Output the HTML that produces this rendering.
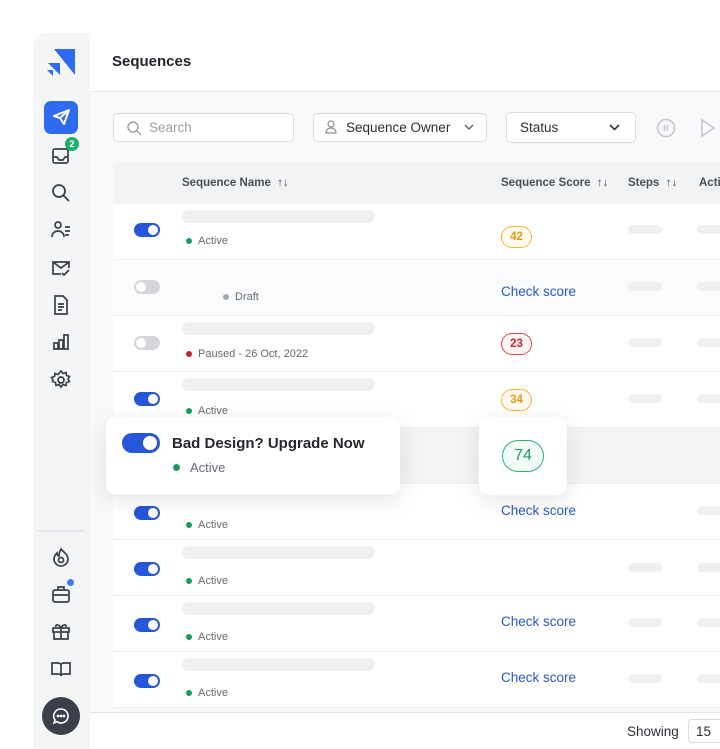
<!DOCTYPE html><html><head><style>
*{box-sizing:border-box;margin:0;padding:0}
body{width:720px;height:749px;background:#fff;font-family:"Liberation Sans",sans-serif;position:relative;overflow:hidden;color:#1f2328}
.abs{position:absolute}
.sb{left:33px;top:33px;width:57px;height:716px;background:#f4f5f7;border-radius:14px 0 0 0}
.ic{position:absolute;left:50px;width:22px;height:22px}
.main{left:90px;top:33px;width:630px;height:716px;background:#f8f9fa}
.tog{position:absolute;width:26px;height:14px;border-radius:7px;background:#2756d8}
.tog::after{content:"";position:absolute;right:2px;top:2px;width:10px;height:10px;border-radius:50%;background:#fff}
.tog.off{background:#d4d6da}.tog.off::after{left:2px;right:auto}
.row{position:absolute;left:113px;width:607px;height:56px;border-bottom:1px solid #eceef1;background:#fff}
.sk{position:absolute;height:13px;border-radius:7px;background:#eef0f2}
.st{position:absolute;font-size:11px;color:#666a70}
.st i{position:absolute;left:-12px;top:3px;width:6px;height:6px;border-radius:50%;background:#1a9a62}
.bd{position:absolute;left:388px;width:31px;height:22px;border-radius:11px;font-size:11.5px;font-weight:bold;text-align:center;line-height:20px}
.cs{position:absolute;left:388px;font-size:13.5px;color:#2a57c7}
</style></head><body>
<div class="abs sb"></div>
<svg class="abs" style="left:46px;top:49px" width="30" height="28"><polygon points="8,0 29,0 29,26" fill="#2f6bf0"/><polygon points="2,14 14,14 14,26" fill="#2f6bf0"/><polygon points="1,21 7,21 7,27" fill="#2f6bf0"/></svg>
<div class="abs" style="left:44px;top:101px;width:34px;height:33px;border-radius:7px;background:#2f6bf0"></div>
<svg class="abs" style="left:51px;top:107px" width="20" height="20" fill="none" stroke="#fff" stroke-width="2" stroke-linejoin="round"><path d="M3 9 L18 3 L13 17 L9 11 Z M9 11 L18 3"/></svg>
<svg class="ic" style="top:145px" viewBox="0 0 22 22" fill="none" stroke="#3b3f46" stroke-width="1.7"><rect x="3" y="4" width="15" height="14" rx="2"/><path d="M3 12h4l2 3h4l2-3h3"/></svg>
<div class="abs" style="left:65px;top:137px;width:14px;height:14px;border-radius:50%;background:#1eae6e;color:#fff;font-size:9px;font-weight:bold;text-align:center;line-height:14px">2</div>
<svg class="ic" style="top:182px" viewBox="0 0 22 22" fill="none" stroke="#3b3f46" stroke-width="1.8"><circle cx="9" cy="9" r="6"/><path d="M13.5 13.5 L19 19"/></svg>
<svg class="ic" style="top:219px" viewBox="0 0 22 22" fill="none" stroke="#3b3f46" stroke-width="1.7"><circle cx="8" cy="6" r="3"/><path d="M2 18c0-4 3-6 6-6s6 2 6 6M15 8h5M15 12h5M15 16h4"/></svg>
<svg class="ic" style="top:257px" viewBox="0 0 22 22" fill="none" stroke="#3b3f46" stroke-width="1.7"><path d="M11 17H3V5h16v6M3 5l8 6 8-6M12 16l2 2 5-5"/></svg>
<svg class="ic" style="top:294px" viewBox="0 0 22 22" fill="none" stroke="#3b3f46" stroke-width="1.7"><path d="M5 2h8l4 4v14H5z M8 10h6M8 13h6M8 16h4"/></svg>
<svg class="ic" style="top:331px" viewBox="0 0 22 22" fill="none" stroke="#3b3f46" stroke-width="1.7"><path d="M3 18h16M4 18v-6h4v6M9 18V9h4v9M14 18V4h4v14"/></svg>
<svg class="ic" style="top:369px" viewBox="0 0 22 22" fill="none" stroke="#3b3f46" stroke-width="1.7"><circle cx="11" cy="11" r="3"/><path d="M11 2l2 2.5 3-1 .5 3 3 1-1.5 2.5 1.5 2.5-3 1-.5 3-3-1-2 2.5-2-2.5-3 1-.5-3-3-1L3 11 1.5 8.5l3-1 .5-3 3 1z"/></svg>
<div class="abs" style="left:38px;top:530px;width:46px;height:2px;background:#e3e5e8"></div>
<svg class="ic" style="top:546px" viewBox="0 0 22 22" fill="none" stroke="#3b3f46" stroke-width="1.7"><path d="M11 3c2 3 7 5 7 10a7 7 0 01-14 0c0-3 2-5 3-6 0 2 1 3 2 3 0-3 1-5 2-7z"/><circle cx="11" cy="14" r="2.5"/></svg>
<svg class="ic" style="top:583px" viewBox="0 0 22 22" fill="none" stroke="#3b3f46" stroke-width="1.7"><rect x="3" y="7" width="16" height="12" rx="2"/><path d="M8 7V4h6v3M3 12h16"/></svg>
<div class="abs" style="left:67px;top:579px;width:7px;height:7px;border-radius:50%;background:#3a7df0"></div>
<svg class="ic" style="top:620px" viewBox="0 0 22 22" fill="none" stroke="#3b3f46" stroke-width="1.7"><rect x="3" y="8" width="16" height="4"/><path d="M4 12v7h14v-7M11 8v11M11 8c-2-4-6-4-5-1M11 8c2-4 6-4 5-1"/></svg>
<svg class="ic" style="top:658px" viewBox="0 0 22 22" fill="none" stroke="#3b3f46" stroke-width="1.7"><path d="M2 5h6c2 0 3 1 3 2v11c0-1-1-2-3-2H2zM20 5h-6c-2 0-3 1-3 2v11c0-1 1-2 3-2h6z"/></svg>
<div class="abs" style="left:42px;top:697px;width:38px;height:38px;border-radius:50%;background:#3a3f4b"></div>
<svg class="abs" style="left:51px;top:706px" width="20" height="20" fill="none" stroke="#fff" stroke-width="1.6"><path d="M10 3a7 7 0 11-4 12.7L3 17l1-3A7 7 0 0110 3z"/><circle cx="7" cy="10" r=".6" fill="#fff"/><circle cx="10" cy="10" r=".6" fill="#fff"/><circle cx="13" cy="10" r=".6" fill="#fff"/></svg>

<div class="abs main"></div>
<div class="abs" style="left:90px;top:33px;width:630px;height:59px;background:#fff;border-bottom:1px solid #e8eaed"></div>
<div class="abs" style="left:112px;top:53px;font-size:15px;font-weight:bold;color:#1f2328">Sequences</div>
<div class="abs" style="left:113px;top:113px;width:181px;height:29px;border:1px solid #d9dce0;border-radius:5px;background:#fff"></div>
<svg class="abs" style="left:126px;top:120px" width="16" height="16" fill="none" stroke="#9a9ea5" stroke-width="1.4"><circle cx="7" cy="7" r="5"/><path d="M11 11l4 4"/></svg>
<div class="abs" style="left:149px;top:120px;font-size:13.5px;color:#9ca0a6">Search</div>
<div class="abs" style="left:313px;top:113px;width:174px;height:29px;border:1px solid #d9dce0;border-radius:5px;background:#fff"></div>
<svg class="abs" style="left:325px;top:120px" width="12" height="14" fill="none" stroke="#8a8e95" stroke-width="1.2"><circle cx="6" cy="4" r="3"/><path d="M1 13c0-3 2-5 5-5s5 2 5 5z"/></svg>
<div class="abs" style="left:346px;top:120px;font-size:13.5px;color:#2b2f35">Sequence Owner</div>
<svg class="abs" style="left:464px;top:124px" width="10" height="6" fill="none" stroke="#555" stroke-width="1.3"><path d="M1 1l4 4 4-4"/></svg>
<div class="abs" style="left:506px;top:112px;width:130px;height:31px;border:1px solid #d9dce0;border-radius:5px;background:#fff"></div>
<div class="abs" style="left:520px;top:120px;font-size:13.5px;color:#2b2f35">Status</div>
<svg class="abs" style="left:609px;top:124px" width="11" height="7" fill="none" stroke="#333" stroke-width="1.6"><path d="M1 1l4.5 4.5L10 1"/></svg>
<svg class="abs" style="left:656px;top:118px" width="20" height="20" fill="none" stroke="#c5c8cd" stroke-width="1.6"><circle cx="10" cy="10" r="8.5"/><path d="M8.5 7v6M11.5 7v6"/></svg>
<svg class="abs" style="left:700px;top:118px" width="16" height="20" fill="none" stroke="#c5c8cd" stroke-width="1.6"><path d="M2 2l12 8-12 8z"/></svg>

<div class="abs" style="left:113px;top:162px;width:607px;height:42px;background:#f1f3f5;border-radius:6px 0 0 0"></div>
<div class="abs" style="left:182px;top:177px;font-size:11.5px;font-weight:bold;color:#4a4f57">Sequence Name &nbsp;↑↓</div>
<div class="abs" style="left:501px;top:177px;font-size:11.5px;font-weight:bold;color:#4a4f57">Sequence Score &nbsp;↑↓</div>
<div class="abs" style="left:628px;top:177px;font-size:11.5px;font-weight:bold;color:#4a4f57">Steps &nbsp;↑↓</div>
<div class="abs" style="left:699px;top:177px;font-size:11.5px;font-weight:bold;color:#4a4f57">Acti</div>

<div class="row" style="top:204px"><div class="tog" style="left:21px;top:19px"></div><div class="sk" style="left:69px;top:6px;width:193px"></div><div class="st" style="left:85px;top:31px"><i></i>Active</div><div class="bd" style="top:22px;border:1px solid #f2b63a;color:#e59a12;background:#fffaf0">42</div><div class="sk" style="left:515px;top:21px;width:34px;height:9px"></div><div class="sk" style="left:584px;top:21px;width:30px;height:9px"></div></div>
<div class="row" style="top:260px;background:#fafbfc"><div class="tog off" style="left:21px;top:20px"></div><div class="st" style="left:122px;top:31px"><i style="background:#a5a8ad"></i>Draft</div><div class="cs" style="top:24px">Check score</div><div class="sk" style="left:515px;top:22px;width:34px;height:9px"></div><div class="sk" style="left:584px;top:22px;width:30px;height:9px"></div></div>
<div class="row" style="top:316px"><div class="tog off" style="left:21px;top:20px"></div><div class="sk" style="left:69px;top:6px;width:193px"></div><div class="st" style="left:85px;top:32px"><i style="background:#c0272d"></i>Paused - 26 Oct, 2022</div><div class="bd" style="top:17px;border:1px solid #e0484d;color:#c8282e;background:#fff5f5">23</div><div class="sk" style="left:515px;top:22px;width:34px;height:9px"></div><div class="sk" style="left:584px;top:22px;width:30px;height:9px"></div></div>
<div class="row" style="top:372px"><div class="tog" style="left:21px;top:20px"></div><div class="sk" style="left:69px;top:6px;width:193px"></div><div class="st" style="left:85px;top:33px"><i></i>Active</div><div class="bd" style="top:17px;border:1px solid #f2b63a;color:#e59a12;background:#fffaf0">34</div><div class="sk" style="left:515px;top:22px;width:34px;height:9px"></div><div class="sk" style="left:584px;top:22px;width:30px;height:9px"></div></div>
<div class="row" style="top:428px;background:#f3f4f5"><div class="sk" style="left:135px;top:40px;width:140px;background:#e9eaec"></div></div>
<div class="row" style="top:484px"><div class="tog" style="left:21px;top:22px"></div><div class="st" style="left:85px;top:35px"><i></i>Active</div><div class="cs" style="top:19px">Check score</div><div class="sk" style="left:584px;top:22px;width:30px;height:9px"></div></div>
<div class="row" style="top:540px"><div class="tog" style="left:21px;top:22px"></div><div class="sk" style="left:69px;top:6px;width:193px"></div><div class="st" style="left:85px;top:35px"><i></i>Active</div><div class="sk" style="left:515px;top:23px;width:34px;height:9px"></div><div class="sk" style="left:584px;top:23px;width:30px;height:9px"></div></div>
<div class="row" style="top:596px"><div class="tog" style="left:21px;top:22px"></div><div class="sk" style="left:69px;top:6px;width:193px"></div><div class="st" style="left:85px;top:35px"><i></i>Active</div><div class="cs" style="top:18px">Check score</div><div class="sk" style="left:515px;top:22px;width:34px;height:9px"></div><div class="sk" style="left:584px;top:22px;width:30px;height:9px"></div></div>
<div class="row" style="top:652px"><div class="tog" style="left:21px;top:22px"></div><div class="sk" style="left:69px;top:6px;width:193px"></div><div class="st" style="left:85px;top:35px"><i></i>Active</div><div class="cs" style="top:18px">Check score</div><div class="sk" style="left:515px;top:22px;width:34px;height:9px"></div><div class="sk" style="left:584px;top:22px;width:30px;height:9px"></div></div>
<div class="abs" style="left:90px;top:712px;width:630px;height:37px;background:#fff;border-top:1px solid #e3e5e8"></div>
<div class="abs" style="left:627px;top:724px;font-size:13.5px;color:#2b2f35">Showing</div>
<div class="abs" style="left:688px;top:719px;width:40px;height:24px;border:1px solid #d9dce0;border-radius:4px;padding:4px 7px;font-size:13.5px;color:#2b2f35">15</div>

<div class="abs" style="left:106px;top:417px;width:294px;height:77px;background:#fff;border-radius:8px;box-shadow:0 6px 24px rgba(0,0,0,.1)"></div>
<div class="abs" style="left:122px;top:433px;width:38px;height:20px;border-radius:10px;background:#2756d8"><div style="position:absolute;right:3px;top:3px;width:14px;height:14px;border-radius:50%;background:#fff"></div></div>
<div class="abs" style="left:172px;top:435px;font-size:15px;font-weight:bold;color:#25282d">Bad Design? Upgrade Now</div>
<div class="abs" style="left:173px;top:464px;width:7px;height:7px;border-radius:50%;background:#1a9a62"></div>
<div class="abs" style="left:190px;top:460px;font-size:13px;color:#666a70">Active</div>
<div class="abs" style="left:479px;top:417px;width:88px;height:78px;background:#fff;border-radius:10px;box-shadow:0 6px 24px rgba(0,0,0,.1)"></div>
<div class="abs" style="left:502px;top:440px;width:42px;height:32px;border-radius:16px;border:1px solid #2bb07a;background:#f3fbf7;color:#1f9a66;font-size:16px;text-align:center;line-height:30px">74</div>
</body></html>
